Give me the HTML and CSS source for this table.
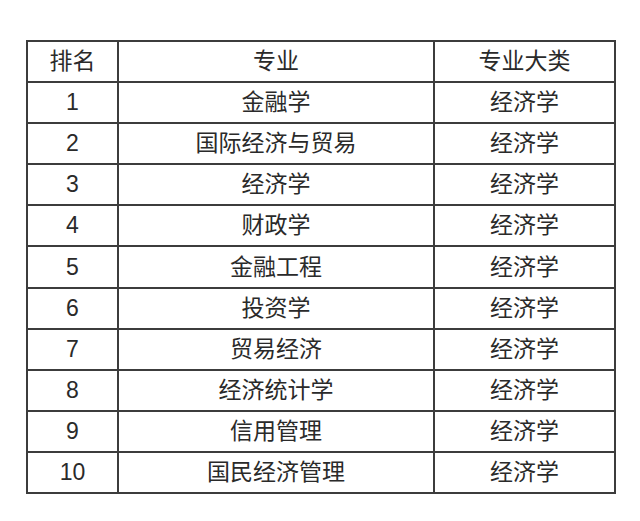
FILE: index.html
```html
<!DOCTYPE html>
<html lang="zh">
<head>
<meta charset="utf-8">
<link rel="stylesheet" href="styles.css">
</head>
<body>
<table class="rank">
  <colgroup><col class="c1"><col class="c2"><col class="c3"></colgroup>
  <tr><td>排名</td><td>专业</td><td>专业大类</td></tr>
  <tr><td>1</td><td>金融学</td><td>经济学</td></tr>
  <tr><td>2</td><td>国际经济与贸易</td><td>经济学</td></tr>
  <tr><td>3</td><td>经济学</td><td>经济学</td></tr>
  <tr><td>4</td><td>财政学</td><td>经济学</td></tr>
  <tr><td>5</td><td>金融工程</td><td>经济学</td></tr>
  <tr><td>6</td><td>投资学</td><td>经济学</td></tr>
  <tr><td>7</td><td>贸易经济</td><td>经济学</td></tr>
  <tr><td>8</td><td>经济统计学</td><td>经济学</td></tr>
  <tr><td>9</td><td>信用管理</td><td>经济学</td></tr>
  <tr><td>10</td><td>国民经济管理</td><td>经济学</td></tr>
</table>
</body>
</html>
```
FILE: styles.css
```css
html, body { margin: 0; padding: 0; background: #fff; }
body { padding: 40px 0 0 26px; }
.rank {
  border-collapse: collapse;
  table-layout: fixed;
  width: 588px;
  font-family: "Liberation Sans", "Noto Sans CJK SC", sans-serif;
  font-size: 23px;
  color: #2a2a2a;
}
.c1 { width: 91px; }
.c2 { width: 316px; }
.c3 { width: 181px; }
.rank tr { height: 41.1px; }
.rank td {
  border: 2px solid #3c3c3c;
  text-align: center;
  vertical-align: middle;
  padding: 0;
  line-height: 1;
}
```
